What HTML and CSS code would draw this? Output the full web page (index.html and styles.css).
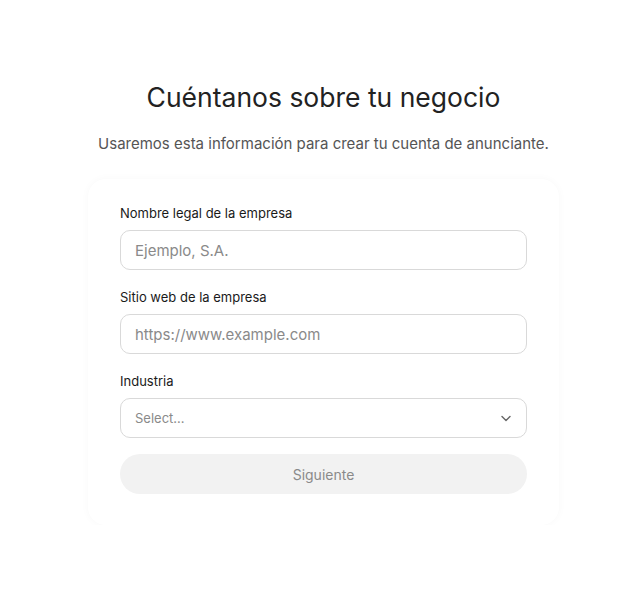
FILE: index.html
```html
<!DOCTYPE html>
<html lang="es">

<head>
  <meta charset="UTF-8">
  <meta name="viewport" content="width=device-width, initial-scale=1.0">
  <title>Cuéntanos sobre tu negocio</title>
  <link rel="stylesheet" href="styles.css">
</head>

<body>
  <main class="page">
    <h1 class="title">Cuéntanos sobre tu negocio</h1>
    <p class="subtitle">Usaremos esta información para crear tu cuenta de anunciante.</p>

    <form class="card">
      <div class="field">
        <label class="label" for="name">Nombre legal de la empresa</label>
        <input class="input" id="name" type="text" placeholder="Ejemplo, S.A.">
      </div>
      <div class="field">
        <label class="label" for="web">Sitio web de la empresa</label>
        <input class="input" id="web" type="text" placeholder="https://www.example.com">
      </div>
      <div class="field">
        <label class="label" for="industry">Industria</label>
        <div class="select" id="industry">
          <span class="select-text">Select...</span>
          <svg class="chevron" width="12" height="12" viewBox="0 0 12 12" fill="none">
            <path d="M2 4.5l4 4 4-4" stroke="#666" stroke-width="1.4" stroke-linecap="round" stroke-linejoin="round" />
          </svg>
        </div>
      </div>
      <button class="btn" type="button" disabled>Siguiente</button>
    </form>
  </main>
</body>

</html>
```

FILE: styles.css
```css
* {
  box-sizing: border-box;
}

body {
  margin: 0;
  background: #fff;
  font-family: Inter, 'Noto Sans', sans-serif;
  color: #222;
}

.page {
  display: flex;
  flex-direction: column;
  align-items: center;
  padding: 79px 0 0 5px;
}

.title {
  margin: 0;
  font-size: 26.5px;
  font-weight: 400;
  line-height: 36px;
  color: #222;
}

.subtitle {
  margin: 18px 0 0;
  font-size: 15px;
  line-height: 22px;
  color: #555;
}

.card {
  width: 471px;
  margin-top: 24px;
  padding: 25px 32px 31px;
  border-radius: 18px;
  background: #fff;
  box-shadow: 0 0 8px rgba(0, 0, 0, 0.03);
  display: flex;
  flex-direction: column;
  gap: 18px;
}

.field {
  display: flex;
  flex-direction: column;
  gap: 8px;
}

.label {
  font-size: 13px;
  line-height: 18px;
  color: #1a1a1a;
}

.input,
.select {
  height: 40px;
  width: 100%;
  border: 1px solid #d9d9d9;
  border-radius: 10px;
  padding: 0 14px;
  font-family: inherit;
  font-size: 15px;
  color: #222;
  background: #fff;
}

.input::placeholder {
  color: #8a8a8a;
}

.select {
  display: flex;
  align-items: center;
  justify-content: space-between;
}

.select-text {
  font-size: 13px;
  color: #8a8a8a;
}

.btn {
  margin-top: -2px;
  height: 40px;
  border: none;
  border-radius: 20px;
  background: #f2f2f2;
  font-family: inherit;
  font-size: 14px;
  color: #8a8a8a;
}
```
